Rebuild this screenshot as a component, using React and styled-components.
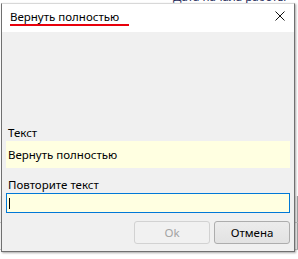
import React from 'react';
import styled, { createGlobalStyle } from 'styled-components';

const GlobalStyle = createGlobalStyle`
  html, body {
    margin: 0;
    padding: 0;
  }
  body {
    width: 298px;
    height: 259px;
    overflow: hidden;
    background: #ffffff;
    font-family: "Noto Sans", "Liberation Sans", sans-serif;
    font-size: 11.5px;
    color: #000000;
  }
`;

const Desktop = styled.div`
  position: relative;
  width: 298px;
  height: 259px;
  overflow: hidden;
  background: #ffffff;
`;

/* the window behind the dialog, only its edges show */
const BackWindow = styled.div`
  position: absolute;
  inset: 0;
  background: #ffffff;
`;

const BackCaption = styled.div`
  position: absolute;
  left: 173px;
  top: -11px;
  line-height: 16px;
  color: #1c2a5a;
  white-space: nowrap;
`;

const BackGrid = styled.div`
  position: absolute;
  left: 0;
  top: 196px;
  width: 298px;
  display: grid;
  grid-template-columns: 100px 132px 66px;
  grid-auto-rows: 27px;
`;

const BackCell = styled.div`
  border-right: 1px solid #a0a0a0;
  border-bottom: 1px solid #c8c8c8;
  background: #f4f4f4;
  color: #1a4f9c;
  line-height: 27px;
  padding-left: 4px;
  white-space: nowrap;
  overflow: hidden;
`;

const Dialog = styled.div`
  position: absolute;
  left: 1px;
  top: 3px;
  width: 294px;
  height: 249px;
  box-sizing: border-box;
  border: 1px solid #707070;
  border-top-color: #d8d8d8;
  background: #f0f0f0;
  display: flex;
  flex-direction: column;
  box-shadow: 1px 1px 2px rgba(0, 0, 0, 0.35);
`;

const TitleBar = styled.div`
  height: 28px;
  flex: none;
  background: #ffffff;
  display: flex;
  align-items: flex-start;
  justify-content: space-between;
  padding: 5px 9px 0 8px;
  box-sizing: border-box;
`;

const Title = styled.span`
  display: inline-block;
  line-height: 15px;
  padding-right: 10px;
  border-bottom: 2px solid #e8000b;
  white-space: nowrap;
`;

const CloseButton = styled.div`
  width: 10px;
  height: 10px;
  margin-top: 2px;
  display: flex;

  svg {
    display: block;
  }
`;

const CloseIcon = () => (
  <svg width="10" height="10" viewBox="0 0 10 10">
    <path d="M0.5 0.5L9.5 9.5M9.5 0.5L0.5 9.5" stroke="#111" strokeWidth="1" fill="none" />
  </svg>
);

const Client = styled.div`
  flex: 1;
  display: flex;
  flex-direction: column;
  justify-content: flex-end;
  padding: 0 4px 7px 4px;
`;

const Label = styled.div`
  line-height: 16px;
  height: 16px;
  padding-left: 2px;
  white-space: nowrap;
`;

const ReadOnlyField = styled.div`
  height: 27px;
  background: #ffffe1;
  line-height: 27px;
  padding-left: 2px;
  margin-bottom: 9px;
  white-space: nowrap;
`;

const TextInput = styled.div`
  height: 20px;
  box-sizing: border-box;
  border: 1px solid #0078d7;
  background: #ffffe1;
  display: flex;
  align-items: center;
  padding-left: 2px;
  margin-bottom: 8px;
`;

const Caret = styled.span`
  width: 1px;
  height: 11px;
  background: #000000;
`;

const ButtonRow = styled.div`
  display: flex;
  justify-content: flex-end;
  gap: 4px;
`;

const Button = styled.div`
  width: 76px;
  height: 23px;
  box-sizing: border-box;
  border: 1px solid ${p => (p.disabled ? '#d2d2d2' : '#adadad')};
  border-radius: 3px;
  background: ${p => (p.disabled ? '#f1f1f1' : 'linear-gradient(#ececec, #e2e2e2)')};
  color: ${p => (p.disabled ? '#a3a3a3' : '#000000')};
  display: flex;
  align-items: center;
  justify-content: center;
  line-height: 16px;
`;

const backCells = ['', '', 'ц', '', '', ''];

const App = () => (
  <Desktop>
    <GlobalStyle />
    <BackWindow>
      <BackCaption>Дата начала работы</BackCaption>
      <BackGrid>
        {backCells.map((t, i) => (
          <BackCell key={i}>{t}</BackCell>
        ))}
      </BackGrid>
    </BackWindow>

    <Dialog>
      <TitleBar>
        <Title>Вернуть полностью</Title>
        <CloseButton>
          <CloseIcon />
        </CloseButton>
      </TitleBar>
      <Client>
        <Label>Текст</Label>
        <ReadOnlyField>Вернуть полностью</ReadOnlyField>
        <Label>Повторите текст</Label>
        <TextInput>
          <Caret />
        </TextInput>
        <ButtonRow>
          <Button disabled>Ok</Button>
          <Button>Отмена</Button>
        </ButtonRow>
      </Client>
    </Dialog>
  </Desktop>
);

export default App;
